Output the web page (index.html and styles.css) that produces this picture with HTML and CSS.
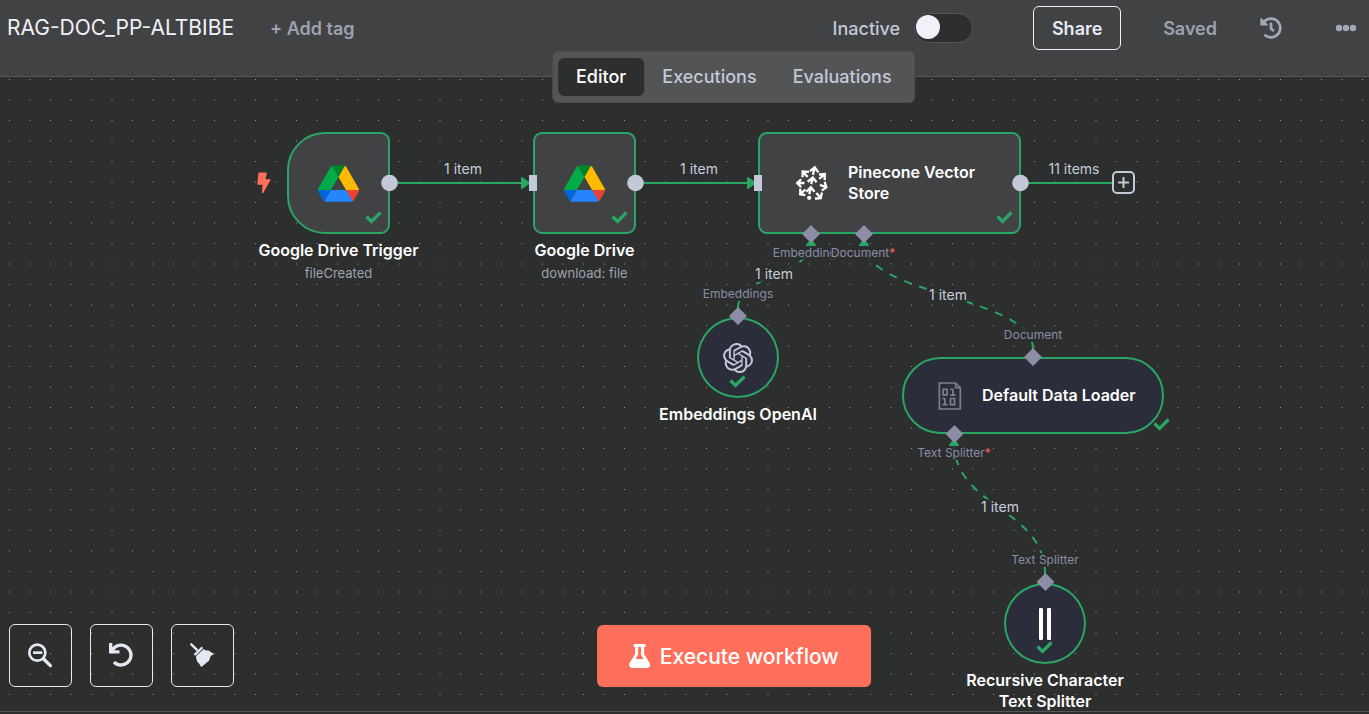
FILE: index.html
```html
<!DOCTYPE html>
<html lang="en">
<head>
<meta charset="utf-8">
<meta name="viewport" content="width=device-width, initial-scale=1">
<title>RAG-DOC_PP-ALTBIBE</title>
<link rel="stylesheet" href="styles.css">
</head>
<body>
<svg class="defs" aria-hidden="true">
  <symbol id="check" viewBox="0 0 17 13"><path d="M1.5 5.5 6.5 10.500 15.500 1.500" fill="none" stroke="currentColor" stroke-width="3.200"/></symbol>
  <symbol id="drive" viewBox="0 0 87.3 78">
    <path d="m6.6 66.85 3.85 6.65c.8 1.4 1.95 2.5 3.3 3.3l13.75-23.8h-27.5c0 1.55.4 3.1 1.2 4.5z" fill="#0066da"/>
    <path d="m43.65 25-13.75-23.8c-1.35.8-2.5 1.9-3.3 3.3l-25.4 44a9.06 9.06 0 0 0-1.2 4.5h27.5z" fill="#00ac47"/>
    <path d="m73.55 76.8c1.35-.8 2.5-1.9 3.3-3.3l1.6-2.75 7.65-13.25c.8-1.4 1.2-2.95 1.2-4.5h-27.5l5.85 11.5z" fill="#ea4335"/>
    <path d="m43.65 25 13.75-23.8c-1.35-.8-2.9-1.2-4.5-1.2h-18.5c-1.6 0-3.15.45-4.5 1.2z" fill="#00832d"/>
    <path d="m59.8 53h-32.3l-13.75 23.8c1.35.8 2.9 1.2 4.5 1.2h50.8c1.6 0 3.15-.45 4.5-1.2z" fill="#2684fc"/>
    <path d="m73.4 26.500-12.7-22c-.8-1.4-1.95-2.5-3.3-3.3l-13.75 23.8 16.15 28h27.45c0-1.55-.4-3.1-1.2-4.5z" fill="#ffba00"/>
  </symbol>
</svg>

<header class="topbar">
  <h1 class="title">RAG-DOC_PP-ALTBIBE</h1>
  <button class="text-btn add-tag" type="button">+ Add tag</button>
  <div class="actions">
    <label class="status" for="active">Inactive</label>
    <input class="switch" id="active" type="checkbox" role="switch">
    <button class="share" type="button">Share</button>
    <span class="saved">Saved</span>
    <button class="icon-btn history" type="button" aria-label="Workflow history">
      <svg width="22" height="22" viewBox="0 0 512 512"><path fill="currentColor" d="M504 255.531c.253 136.64-111.18 248.372-247.82 248.468-59.015.042-113.223-20.53-155.822-54.911-11.077-8.94-11.905-25.541-1.839-35.607l11.267-11.267c8.609-8.609 22.353-9.551 31.891-1.984C173.062 425.135 212.781 440 256 440c101.705 0 184-82.311 184-184 0-101.705-82.311-184-184-184-48.814 0-93.149 18.969-126.068 49.932l50.754 50.754c10.08 10.08 2.941 27.314-11.313 27.314H24c-8.837 0-16-7.163-16-16V38.627c0-14.254 17.234-21.393 27.314-11.314l49.372 49.372C129.209 34.136 189.552 8 256 8c136.81 0 247.747 110.78 248 247.531zm-180.912 78.784l9.823-12.63c8.138-10.463 6.253-25.542-4.21-33.679L288 256.349V152c0-13.255-10.745-24-24-24h-16c-13.255 0-24 10.745-24 24v135.651l65.409 50.874c10.463 8.137 25.541 6.253 33.679-4.21z"/></svg>
    </button>
    <button class="icon-btn more" type="button" aria-label="More options">
      <svg width="22" height="8" viewBox="0 0 22 8" fill="currentColor"><circle cx="4" cy="4" r="3.200"/><circle cx="11" cy="4" r="3.200"/><circle cx="18" cy="4" r="3.200"/></svg>
    </button>
  </div>
  <nav class="tabs">
    <a class="tab tab-active" href="#editor">Editor</a>
    <a class="tab" href="#executions">Executions</a>
    <a class="tab" href="#evaluations">Evaluations</a>
  </nav>
</header>

<main class="canvas">
  <svg class="layer" aria-hidden="true">
    <defs>
      <pattern id="dots" x="9" y="2" width="41" height="41" patternUnits="userSpaceOnUse">
        <rect width="1" height="1" fill="#8e8f91"/>
        <rect x="20" width="2" height="1" fill="#5e5f60"/>
        <rect y="20" width="1" height="2" fill="#626364"/>
        <rect x="20" y="20" width="2" height="2" fill="#484949"/>
      </pattern>
    </defs>
    <rect width="100%" height="100%" fill="url(#dots)"/>
    <g fill="none" stroke="#2aa564" stroke-width="2">
      <path d="M390 106H528M636 106H754M1021 106H1112"/>
      <g stroke-dasharray="8 8">
        <path d="M738 231C738 198 811 198 811 166"/>
        <path d="M1033 272C1033 219 864 219 864 166"/>
        <path d="M1045 497C1045 431 954 431 954 365"/>
      </g>
    </g>
    <g fill="#2aa564" stroke="#2aa564" stroke-width="2" stroke-linejoin="round">
      <path d="M522 101V111L529 106ZM748 101V111L755 106ZM807 168H815L811 163ZM860 168H868L864 163ZM950 368H958L954 363Z"/>
    </g>
  </svg>

  <span class="port-label" style="left:811px;top:169px">Embeddings<b class="req">*</b></span>
  <span class="port-label" style="left:863px;top:169px">Document<b class="req">*</b></span>
  <span class="port-label" style="left:738px;top:210px">Embeddings</span>
  <span class="port-label" style="left:1033px;top:251px">Document</span>
  <span class="port-label" style="left:954px;top:369px">Text Splitter<b class="req">*</b></span>
  <span class="port-label" style="left:1045px;top:476px">Text Splitter</span>

  <span class="edge-label" style="left:463px;top:84px">1 item</span>
  <span class="edge-label" style="left:699px;top:84px">1 item</span>
  <span class="edge-label" style="left:1074px;top:84px">11 items</span>
  <span class="edge-label" style="left:774px;top:189px">1 item</span>
  <span class="edge-label" style="left:948px;top:210px">1 item</span>
  <span class="edge-label" style="left:1000px;top:422px">1 item</span>

  <svg class="bolt" viewBox="50 155 43 67" aria-hidden="true"><path d="M57 156H78Q81 156 80 159L76 177H90Q93 178 91 181L69 219Q66 222 65 218L67 194H53Q50 193 51 190L54 159Q55 156 57 156Z" fill="#ff6f5c"/></svg>

  <section class="node" style="left:287px;top:55px">
    <div class="box box-square box-trigger"><svg class="drive"><use href="#drive"/></svg><svg class="check"><use href="#check"/></svg></div>
    <div class="caption"><h2 class="name">Google Drive Trigger</h2><p class="sub">fileCreated</p></div>
  </section>
  <section class="node" style="left:533px;top:55px">
    <div class="box box-square"><svg class="drive"><use href="#drive"/></svg><svg class="check"><use href="#check"/></svg></div>
    <div class="caption"><h2 class="name">Google Drive</h2><p class="sub">download: file</p></div>
  </section>
  <section class="node" style="left:758px;top:55px">
    <div class="box box-wide">
      <svg class="pinecone" viewBox="165 135 100 108" fill="none" stroke="#fff" stroke-width="7" stroke-linecap="square">
        <path d="M225 142 220 161M213 151 225 142 234 154M189 156 201 168M204 155 188 154 188 168M172 189H190M181 180 172 189 181 199M181 223 194 211M181 210 181 223 193 225M243 234 232 222M246 221 243 235 229 236M259 201 244 196M256 189 260 202 249 210M255 163 241 174M241 163 255 162 255 177M219 174 215 189M206 183 219 173 228 184M213 203 209 220M202 213 213 202 222 213"/>
        <circle cx="208" cy="234" r="3"/>
      </svg>
      <h2 class="name">Pinecone Vector<br>Store</h2>
      <svg class="check"><use href="#check"/></svg>
    </div>
  </section>
  <section class="node" style="left:697px;top:240px">
    <div class="box box-round">
      <svg class="openai" viewBox="0 0 24 24"><path fill="#c3c8d8" d="M22.2819 9.8211a5.9847 5.9847 0 0 0-.5157-4.9108 6.0462 6.0462 0 0 0-6.5098-2.9A6.0651 6.0651 0 0 0 4.9807 4.1818a5.9847 5.9847 0 0 0-3.9977 2.9 6.0462 6.0462 0 0 0 .7427 7.0966 5.98 5.98 0 0 0 .511 4.9107 6.051 6.051 0 0 0 6.5146 2.9001A5.9847 5.9847 0 0 0 13.2599 24a6.0557 6.0557 0 0 0 5.7718-4.2058 5.9894 5.9894 0 0 0 3.9977-2.9001 6.0557 6.0557 0 0 0-.7475-7.0729zm-9.022 12.6081a4.4755 4.4755 0 0 1-2.8764-1.0408l.1419-.0804 4.7783-2.7582a.7948.7948 0 0 0 .3927-.6813v-6.7369l2.02 1.1686a.071.071 0 0 1 .038.052v5.5826a4.504 4.504 0 0 1-4.4945 4.4944zm-9.6607-4.1254a4.4708 4.4708 0 0 1-.5346-3.0137l.142.0852 4.783 2.7582a.7712.7712 0 0 0 .7806 0l5.8428-3.3685v2.3324a.0804.0804 0 0 1-.0332.0615L9.74 19.9502a4.4992 4.4992 0 0 1-6.1408-1.6464zM2.3408 7.8956a4.485 4.485 0 0 1 2.3655-1.9728V11.6a.7664.7664 0 0 0 .3879.6765l5.8144 3.3543-2.0201 1.1685a.0757.0757 0 0 1-.071 0l-4.8303-2.7865A4.504 4.504 0 0 1 2.3408 7.872zm16.5963 3.8558L13.1038 8.364 15.1192 7.2a.0757.0757 0 0 1 .071 0l4.8303 2.7913a4.4944 4.4944 0 0 1-.6765 8.1042v-5.6772a.79.79 0 0 0-.407-.667zm2.0107-3.0231l-.142-.0852-4.7735-2.7818a.7759.7759 0 0 0-.7854 0L9.409 9.2297V6.8974a.0662.0662 0 0 1 .0284-.0615l4.8303-2.7866a4.4992 4.4992 0 0 1 6.6802 4.66zM8.3065 12.863l-2.02-1.1638a.0804.0804 0 0 1-.038-.0567V6.0742a4.4992 4.4992 0 0 1 7.3757-3.4537l-.142.0805L8.704 5.459a.7948.7948 0 0 0-.3927.6813zm1.0976-2.3654l2.602-1.4998 2.6069 1.4998v2.9994l-2.5974 1.4997-2.6067-1.4997Z"/></svg>
      <svg class="check"><use href="#check"/></svg>
    </div>
    <div class="caption"><h2 class="name">Embeddings OpenAI</h2></div>
  </section>
  <section class="node" style="left:902px;top:280px">
    <div class="box box-pill">
      <svg class="binary" viewBox="176 365 69 83" fill="none" stroke="#7f7f8b" stroke-width="5"><path d="M179 368H227L241 382V445H179ZM227 368V382H241"/><path d="M190 387H202V403H190ZM211 387H219V404M211 404H227M188 414H195V432M188 432H203M212 414H224V432H212Z"/></svg>
      <h2 class="name">Default Data Loader</h2>
      <svg class="check"><use href="#check"/></svg>
    </div>
  </section>
  <section class="node" style="left:1004px;top:506px">
    <div class="box box-round">
      <svg class="bars" viewBox="0 0 12 32" fill="#fff"><rect width="4" height="32" rx="1"/><rect x="8" width="4" height="32" rx="1"/></svg>
      <svg class="check"><use href="#check"/></svg>
    </div>
    <div class="caption"><h2 class="name">Recursive Character<br>Text Splitter</h2></div>
  </section>

  <svg class="layer layer-handles" aria-hidden="true">
    <g fill="#c3c9d6">
      <circle cx="389.500" cy="106" r="8.300"/><circle cx="635.500" cy="106" r="8.300"/><circle cx="1020.500" cy="106" r="8.300"/>
      <rect x="529" y="98" width="8" height="16"/><rect x="754" y="98" width="8" height="16"/>
    </g>
    <g fill="#8d8ea6">
      <path d="M811 148l9 9-9 9-9-9zM864 148l9 9-9 9-9-9zM738 230l9 9-9 9-9-9zM1033 271l9 9-9 9-9-9zM954.500 348l9 9-9 9-9-9zM1045.500 496l9 9-9 9-9-9z"/>
    </g>
  </svg>
  <button class="add-node" type="button" aria-label="Add node"><svg width="11" height="11" viewBox="0 0 11 11"><path d="M5.500 0V11M0 5.500H11" stroke="currentColor" stroke-width="2"/></svg></button>

  <div class="controls">
    <button class="control" type="button" aria-label="Zoom out"><svg width="25" height="25" viewBox="84 129 75 75" fill="none" stroke="currentColor"><circle cx="112" cy="158" r="24" stroke-width="8"/><path d="M99 158H127" stroke-width="8"/><path d="M131 177 151 197" stroke-width="10" stroke-linecap="round"/></svg></button>
    <button class="control" type="button" aria-label="Reset zoom"><svg width="25" height="25" viewBox="0 0 533 533"><path fill="currentColor" d="M212.333 224.333H12c-6.627 0-12-5.373-12-12V12C0 5.373 5.373 0 12 0h48c6.627 0 12 5.373 12 12v78.112C117.773 39.279 184.26 7.47 258.175 8.007c136.906.994 246.448 111.623 246.157 248.532C504.041 393.258 393.12 504 256.333 504c-64.089 0-122.496-24.313-166.51-64.215-5.099-4.622-5.334-12.554-.467-17.42l33.967-33.967c4.474-4.474 11.662-4.717 16.401-.525C170.76 415.336 211.58 432 256.333 432c97.268 0 176-78.716 176-176 0-97.267-78.716-176-176-176-58.496 0-110.28 28.476-142.274 72.333h98.274c6.627 0 12 5.373 12 12v48c0 6.627-5.373 12-12 12z"/></svg></button>
    <button class="control" type="button" aria-label="Tidy up"><svg width="25" height="25" viewBox="570 129 75 75"><path d="M574 133 590 149M586 163 605 144" stroke="currentColor" stroke-width="7" stroke-linecap="round"/><path fill="currentColor" d="M588 169 611 147Q617 153 624 151L642 162 632 168 627 182 604 201Q600 196 598 191L594 188Q588 180 588 169Z"/></svg></button>
  </div>
  <button class="execute" type="button"><svg width="21" height="24" viewBox="0 0 448 512"><path fill="currentColor" d="M437.200 403.500L320 215V64h8c13.300 0 24-10.700 24-24V24c0-13.300-10.700-24-24-24H120c-13.300 0-24 10.700-24 24v16c0 13.300 10.700 24 24 24h8v151L10.800 403.500C-18.500 450.600 15.300 512 70.900 512h306.200c55.700 0 89.400-61.500 60.100-108.500zM137.900 320l48.200-77.600c3.700-5.200 5.800-11.600 5.800-18.400V64h64v160c0 6.900 2.200 13.200 5.800 18.400l48.200 77.600h-172z"/></svg>Execute workflow</button>
</main>
<footer class="logs"></footer>
</body>
</html>
```
FILE: styles.css
```css
* { box-sizing: border-box; }
body {
  margin: 0;
  min-height: 100vh;
  display: flex;
  flex-direction: column;
  overflow: hidden;
  background: #2d2e2e;
  color: #fff;
  font-family: Inter, "Liberation Sans", sans-serif;
}
button { margin: 0; padding: 0; border: 0; background: none; color: inherit; font: inherit; }
svg { display: block; }
h1, h2, p { margin: 0; }
.defs { position: absolute; width: 0; height: 0; }

.topbar {
  position: relative;
  z-index: 2;
  display: flex;
  align-items: center;
  padding: 6px 12px 26px 7px;
  background: #414244;
  border-bottom: 1px solid #56575a;
}
.title { font-size: 21px; font-weight: 400; line-height: 44px; color: #f0f1f8; }
.add-tag { margin-left: 36px; font-size: 18px; font-weight: 600; color: #9ea2b0; }
.actions { display: flex; align-items: center; margin-left: auto; font-size: 18px; font-weight: 600; }
.status { font-weight: 500; color: #c3c8d6; }
.switch {
  appearance: none;
  width: 59px;
  height: 30px;
  margin: 0 60px 0 14px;
  padding: 1px;
  border: 1px solid #525356;
  border-radius: 15px;
  background: #2d2e2e;
}
.switch::before { content: ""; display: block; width: 24px; height: 24px; border-radius: 50%; background: #f1f2f9; }
.share { width: 88px; height: 44px; border: 1px solid #f1f2f9; border-radius: 6px; color: #e6e9f3; }
.saved { margin-left: 42px; color: #9ea2b0; }
.icon-btn { color: #a3a8b7; }
.history { margin-left: 43px; }
.more { margin-left: 53px; }

.tabs {
  position: absolute;
  top: 51px;
  left: 53.6%;
  transform: translateX(-50%);
  display: flex;
  padding: 6px 5px;
  border: 1px solid #4b4c4e;
  border-radius: 6px;
  background: #535456;
}
.tab { padding: 0 18px; border-radius: 6px; font-size: 18px; font-weight: 500; line-height: 38px; color: #c3c8d6; text-decoration: none; }
.tab-active { background: #2d2e2e; color: #fff; }

.canvas { position: relative; flex: 1; overflow: hidden; }
.layer { position: absolute; inset: 0; width: 100%; height: 100%; }
.layer-handles { pointer-events: none; }
.port-label, .edge-label { position: absolute; transform: translateX(-50%); white-space: nowrap; background: rgb(45 46 46 / 85%); }
.port-label { font-size: 12px; line-height: 14px; color: #8b8ca6; }
.req { font-weight: 400; color: #ff5a5a; }
.edge-label { font-size: 14px; line-height: 16px; color: #c8ccd9; }
.bolt { position: absolute; left: 257px; top: 95px; width: 14px; height: 22px; }

.node { position: absolute; display: flex; flex-direction: column; align-items: center; }
.box { position: relative; display: flex; align-items: center; justify-content: center; border: 2px solid #2aa564; border-radius: 9px; background: #414244; }
.box-square { width: 103px; height: 102px; }
.box-trigger { border-radius: 38px 9px 9px 38px; }
.box-wide { width: 263px; height: 102px; justify-content: flex-start; gap: 20px; padding-left: 35px; }
.box-round { width: 82px; height: 81px; border-radius: 50%; background: #2c2d3b; }
.box-pill { width: 262px; height: 77px; border-radius: 39px; justify-content: flex-start; gap: 20px; padding-left: 34px; background: #2c2d3b; }
.check { position: absolute; right: 6px; bottom: 8px; width: 17px; height: 13px; color: #2aa564; }
.box-round .check { right: 31px; bottom: 8px; }
.box-pill .check { right: -8px; bottom: 1px; }
.drive { width: 41px; height: 37px; }
.pinecone { width: 33px; height: 36px; }
.openai { width: 30px; height: 30px; }
.binary { width: 24px; height: 28px; }
.bars { width: 12px; height: 32px; }
.caption { position: absolute; top: 100%; padding-top: 6px; text-align: center; white-space: nowrap; }
.name { font-size: 16px; font-weight: 600; line-height: 21px; color: #fff; }
.sub { padding-top: 4px; font-size: 13px; line-height: 16px; color: #9ea2b0; }
.add-node {
  position: absolute;
  left: 1112px;
  top: 94px;
  display: grid;
  place-items: center;
  width: 23px;
  height: 23px;
  border: 2px solid #c3c9d6;
  border-radius: 5px;
  background: #2d2e2e;
  color: #c3c9d6;
}

.controls { position: absolute; left: 9px; bottom: 24px; display: flex; gap: 18px; }
.control { display: grid; place-items: center; width: 63px; height: 63px; border: 1px solid #e6e9f3; border-radius: 6px; color: #e6e9f3; }
.execute {
  position: absolute;
  left: 53.6%;
  bottom: 24px;
  transform: translateX(-50%);
  display: flex;
  align-items: center;
  gap: 10px;
  height: 62px;
  padding: 0 32px;
  border-radius: 6px;
  background: #ff6f5c;
  font-size: 21px;
  font-weight: 500;
  white-space: nowrap;
}
.logs { height: 3px; border-top: 1px solid #56575a; background: #2d2e2e; }
```
